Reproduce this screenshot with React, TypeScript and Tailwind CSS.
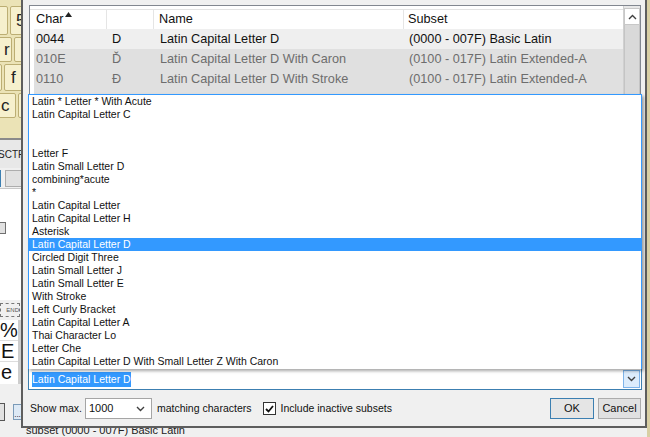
import React from "react";

const listItems = [
  "Latin * Letter * With Acute",
  "Latin Capital Letter C",
  "",
  "",
  "Letter F",
  "Latin Small Letter D",
  "combining*acute",
  "*",
  "Latin Capital Letter",
  "Latin Capital Letter H",
  "Asterisk",
  "Latin Capital Letter D",
  "Circled Digit Three",
  "Latin Small Letter J",
  "Latin Small Letter E",
  "With Stroke",
  "Left Curly Bracket",
  "Latin Capital Letter A",
  "Thai Character Lo",
  "Letter Che",
  "Latin Capital Letter D With Small Letter Z With Caron",
];

const rows = [
  { code: "0044", ch: "D", name: "Latin Capital Letter D", subset: "(0000 - 007F) Basic Latin", active: true },
  { code: "010E", ch: "Ď", name: "Latin Capital Letter D With Caron", subset: "(0100 - 017F) Latin Extended-A", active: false },
  { code: "0110", ch: "Đ", name: "Latin Capital Letter D With Stroke", subset: "(0100 - 017F) Latin Extended-A", active: false },
  { code: "0111", ch: "đ", name: "Latin Small Letter D With Stroke", subset: "(0100 - 017F) Latin Extended-A", active: false },
];

function Key({ label, className }: { label: string; className: string }) {
  return (
    <div
      className={
        "h-full shrink-0 border border-[#bcae73] bg-[#f6f0cd] rounded-[2px] flex items-center text-[17px] text-[#222] " +
        className
      }
    >
      {label}
    </div>
  );
}

function Chevron({ up }: { up?: boolean }) {
  return (
    <svg width="9" height="6" viewBox="0 0 9 6">
      <path
        d={up ? "M1 5 L4.5 1.5 L8 5" : "M1 1 L4.5 4.5 L8 1"}
        fill="none"
        stroke="#404040"
        strokeWidth="1.4"
      />
    </svg>
  );
}

export default function App() {
  return (
    <div
      className="relative w-[650px] h-[437px] overflow-hidden bg-[#f0f0f0]"
      style={{ fontFamily: '"Liberation Sans", Arial, sans-serif' }}
    >
      {/* background application, left strip */}
      <div className="absolute left-0 top-0 w-[22px] h-[437px] overflow-hidden flex flex-col">
        <div className="h-[138px] bg-[#ebe3b6] flex flex-col gap-[2px] pt-[6px]">
          <div className="h-[29px] flex gap-[2px] ml-[-8px]">
            <Key label="" className="w-[16px]" />
            <Key label="5" className="w-[30px] pl-[5px]" />
          </div>
          <div className="h-[25px] flex gap-[2px] ml-[-12px]">
            <Key label="r" className="w-[24px] pl-[15px]" />
            <Key label="" className="w-[20px]" />
          </div>
          <div className="h-[27px] flex gap-[2px] ml-[-4px]">
            <Key label="" className="w-[6px]" />
            <Key label="f" className="w-[30px] pl-[6px]" />
          </div>
          <div className="h-[25px] flex gap-[2px] ml-[-14px]">
            <Key label="c" className="w-[30px] pl-[14px]" />
            <Key label="" className="w-[20px]" />
          </div>
        </div>
        <div className="h-[2px] bg-[#8a8a8a]" />
        <div className="h-[28px] bg-[#e8e8e8] flex items-center text-[10px] text-[#222] ml-[-2px] whitespace-nowrap">SCTR</div>
        <div className="h-[20px] flex items-center gap-[4px] ml-[-14px]">
          <div className="w-[17px] h-[17px] border border-[#3c7fb1] bg-[#e5f1fb]" />
          <div className="w-[20px] h-[17px] border border-[#adadad] bg-[#e1e1e1]" />
        </div>
        <div className="h-[112px] bg-white border-t border-[#c8c8c8] flex flex-col justify-start pt-[33px]">
          <div className="w-[7px] h-[12px] border border-[#707070] bg-[#e1e1e1] ml-[-1px]" />
        </div>
        <div className="h-[20px] bg-[#f0f0f0] flex items-center">
          <div className="w-[20px] h-[14px] border border-dashed border-[#777] text-[6px] leading-[12px] text-[#555] flex items-center justify-end">END</div>
        </div>
        <div className="h-[64px] bg-white flex">
          <div className="flex-1 flex flex-col text-[20px] leading-[21px] text-[#111]">
            <div className="h-[21px] border-b border-[#ddd]">%</div>
            <div className="h-[21px] border-b border-[#ddd] pl-[1px]">E</div>
            <div className="h-[21px] pl-[1px]">e</div>
          </div>
          <div className="w-[4px] bg-[#cdcdcd]" />
        </div>
        <div className="h-[18px] bg-[#f0f0f0]" />
        <div className="h-[20px] bg-[#f0f0f0] flex items-center gap-[8px]">
          <div className="w-[6px] h-[18px] border border-[#555] bg-[#e1e1e1] ml-[-1px]" />
          <div className="w-[9px] h-[16px] border border-[#7a9ab8] bg-[#dde9f5] text-[8px] leading-[20px] text-center">...</div>
        </div>
      </div>

      {/* status text under dialog */}
      <div className="absolute left-[26px] top-[424px] text-[11px] leading-[13px] text-[#222]">
        subset (0000 - 007F) Basic Latin
      </div>
      <div className="absolute left-[647px] top-0 w-[3px] h-[437px] bg-[#d8cfa4]" />

      {/* dialog window */}
      <div className="absolute left-[21px] top-[-2px] w-[626px] h-[430px] border-2 border-[#5e5e5e] bg-[#f0f0f0] flex flex-col">
        {/* list view */}
        <div className="ml-[6px] mr-[4px] mt-[5px] h-[358px] border border-[#828790] bg-white flex">
          <div className="flex-1 flex flex-col pt-[3px]">
            <div className="h-[20px] shrink-0 border-t border-[#e3e3e3] flex text-[12.7px] text-[#111] leading-[19px]">
              <div className="w-[77px] pl-[6px] flex items-start gap-[1px] border-r border-[#e5e5e5]">
                <span>Char</span>
                <svg width="7" height="5" viewBox="0 0 7 5" className="mt-[2px]">
                  <path d="M0 5 L3.5 0 L7 5 Z" fill="#222" />
                </svg>
              </div>
              <div className="w-[47px] border-r border-[#e5e5e5]" />
              <div className="w-[250px] pl-[5px] border-r border-[#e5e5e5]">Name</div>
              <div className="flex-1 pl-[4px]">Subset</div>
            </div>
            {rows.map((r, i) => (
              <div key={i} className="h-[20px] shrink-0 flex pl-[4px] text-[12.7px] leading-[20px] whitespace-nowrap">
                <div className={"flex-1 flex " + (r.active ? "bg-[#efefef] text-[#111]" : "bg-[#e0e0e0] text-[#6d6d6d]")}>
                  <div className="w-[73px] pl-[2px]">{r.code}</div>
                  <div className="w-[47px] pl-[5px]">{r.ch}</div>
                  <div className="w-[250px] pl-[6px]">{r.name}</div>
                  <div className="flex-1 pl-[5px]">{r.subset}</div>
                </div>
              </div>
            ))}
          </div>
          <div className="w-[17px] flex flex-col pt-[2px] bg-[#e8e8e8] border-l border-[#d0d0d0]">
            <div className="h-[17px] bg-white border border-[#c8c8c8] flex items-center justify-center">
              <Chevron up />
            </div>
            <div className="flex-1 bg-[#d9d9d9] border-x border-[#c4c4c4]" />
          </div>
        </div>

        {/* combo box edit */}
        <div className="ml-[5px] mr-[3px] mt-[5px] h-[22px] border border-[#3c7fb1] bg-white flex items-center">
          <div className="flex-1 pl-[3px] text-[10.5px] leading-[15px]">
            <span className="bg-[#3399ff] text-white inline-block leading-[15px]">Latin Capital Letter D</span>
          </div>
          <div className="w-[17px] h-[18px] mr-[1px] bg-[#dcecfc] border border-[#7eb4ea] flex items-center justify-center">
            <Chevron />
          </div>
        </div>

        {/* bottom row */}
        <div className="mt-[7px] h-[23px] flex items-center text-[10.5px] text-[#111] pl-[7px] pr-[4px]">
          <span>Show max.</span>
          <div className="ml-[3px] w-[67px] h-[21px] border border-[#a5a5a5] bg-white flex items-center justify-between pl-[3px] pr-[6px]">
            <span className="text-[11px]">1000</span>
            <Chevron />
          </div>
          <span className="ml-[5px]">matching characters</span>
          <div className="ml-[12px] w-[13px] h-[13px] border border-[#333] bg-white flex items-center justify-center">
            <svg width="9" height="8" viewBox="0 0 9 8">
              <path d="M1 4 L3.5 6.5 L8 1" fill="none" stroke="#111" strokeWidth="1.8" />
            </svg>
          </div>
          <span className="ml-[4px]">Include inactive subsets</span>
          <div className="flex-1" />
          <div className="w-[44px] h-[21px] border border-[#3c7fb1] bg-[#e5e5e5] flex items-center justify-center text-[11px]">
            OK
          </div>
          <div className="ml-[4px] w-[43px] h-[21px] border border-[#acacac] bg-[#e1e1e1] flex items-center justify-center text-[11px]">
            Cancel
          </div>
        </div>

        {/* drop-down list */}
        <div className="absolute left-[5px] top-[94px] w-[614px] h-[275px] border border-[#3399ff] border-b-0 bg-white shadow-[2px_2px_3px_rgba(0,0,0,0.35)] flex flex-col">
          {listItems.map((t, i) => (
            <div
              key={i}
              className={
                "h-[13px] shrink-0 pl-[3px] text-[10.5px] leading-[13px] whitespace-nowrap " +
                (i === 11 ? "bg-[#3399ff] text-white" : "text-[#111]")
              }
            >
              {t}
            </div>
          ))}
        </div>
      </div>
    </div>
  );
}
